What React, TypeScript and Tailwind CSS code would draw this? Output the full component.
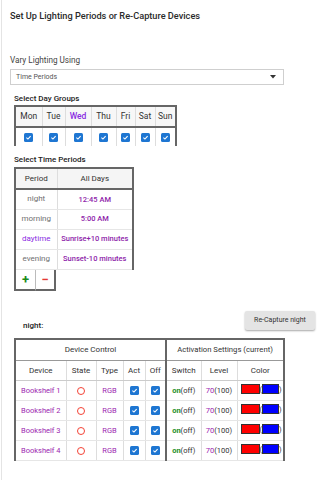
import React from "react";

const font = { fontFamily: "Roboto, 'Liberation Sans', sans-serif" };

function Check() {
  return (
    <span className="inline-flex h-[9px] w-[9px] items-center justify-center rounded-[1.5px] bg-[#1e76d2] align-middle">
      <svg width="7" height="7" viewBox="0 0 10 10">
        <path d="M2 5.2 L4.2 7.2 L8 3" stroke="white" strokeWidth="1.6" fill="none" />
      </svg>
    </span>
  );
}

function Swatches() {
  return (
    <span className="inline-flex items-center text-[7.5px] text-[#333]">
      <span className="inline-block h-[10px] w-[19px] border border-[#333] bg-[#ff0000]" />
      <span>(</span>
      <span className="inline-block h-[10px] w-[17px] border border-[#333] bg-[#0000ff]" />
      <span>)</span>
    </span>
  );
}

const days = ["Mon", "Tue", "Wed", "Thu", "Fri", "Sat", "Sun"];
const dayW = [27, 23, 26, 25, 19, 20, 21];

const periods = [
  { p: "night", t: "12:45 AM", pc: "text-[#6f6f6f]" },
  { p: "morning", t: "5:00 AM", pc: "text-[#6f6f6f]" },
  { p: "daytime", t: "Sunrise+10 minutes", pc: "text-[#8a2be2]" },
  { p: "evening", t: "Sunset-10 minutes", pc: "text-[#6f6f6f]" },
];

export default function App() {
  return (
    <div style={font} className="h-[480px] w-[331px] bg-white">
      <div className="ml-[1px] h-[480px] border-l border-[#e4e4e4] pl-[8px]">
        <div className="pt-[10px] text-[9.2px] font-medium leading-[12px] text-[#2a2a2a]">
          Set Up Lighting Periods or Re-Capture Devices
        </div>
        <div className="mt-[33px] text-[8.2px] leading-[10px] text-[#444]">Vary Lighting Using</div>
        <div className="mt-[4px] flex h-[16px] w-[274px] items-center justify-between border border-[#cfcfcf] pl-[5px] pr-[7px] text-[7px] text-[#555]">
          <span>Time Periods</span>
          <svg width="6" height="4" viewBox="0 0 6 4">
            <path d="M0 0 H6 L3 3.5 Z" fill="#333" />
          </svg>
        </div>

        <div className="ml-[4px] mt-[9px] text-[8px] font-medium leading-[10px] text-[#222]">Select Day Groups</div>
        <table className="ml-[4px] mt-[1px] border-collapse text-[8.5px] text-[#333]">
          <tbody>
            <tr className="h-[21px] bg-[#f7f7f7]">
              {days.map((d, i) => (
                <td
                  key={d}
                  style={{ width: dayW[i] }}
                  className={`border-t-2 border-b-2 border-t-[#666] border-b-[#666] p-0 text-center ${
                    i === 0 ? "border-l-2 border-l-[#666]" : "border-l border-l-[#ddd]"
                  } ${i === 6 ? "border-r-2 border-r-[#666]" : ""} ${d === "Wed" ? "font-medium text-[#8a2be2]" : ""}`}
                >
                  {d}
                </td>
              ))}
            </tr>
            <tr className="h-[19px]">
              {days.map((d, i) => (
                <td
                  key={d}
                  className={`p-0 text-center ${
                    i === 0 ? "border-l-2 border-l-[#666]" : "border-l border-l-[#ddd]"
                  } ${i === 6 ? "border-r-2 border-r-[#666]" : ""}`}
                >
                  <Check />
                </td>
              ))}
            </tr>
          </tbody>
        </table>

        <div className="ml-[4px] mt-[9px] text-[8px] font-medium leading-[10px] text-[#222]">Select Time Periods</div>
        <table className="ml-[4px] mt-[2px] border-collapse text-[8px]">
          <tbody>
            <tr className="h-[21px] bg-[#f5f5f5] text-[#333]">
              <td className="w-[42px] border-2 border-[#666] border-r-[#ddd] border-r p-0 text-center">Period</td>
              <td className="w-[76px] border-2 border-[#666] border-l-0 p-0 text-center">All Days</td>
            </tr>
            {periods.map((r) => (
              <tr key={r.p} className="h-[20px]">
                <td className={`border-b border-l-2 border-r border-b-[#e6e6e6] border-l-[#666] border-r-[#ddd] p-0 text-center ${r.pc}`}>
                  {r.p}
                </td>
                <td className="border-b border-r-2 border-b-[#e6e6e6] border-r-[#666] p-0 text-center text-[7.5px] font-medium text-[#8e24aa]">
                  {r.t}
                </td>
              </tr>
            ))}
          </tbody>
        </table>
        <div className="ml-[4px] flex h-[21px]">
          <div className="flex w-[22px] items-center justify-center border-b-2 border-l-2 border-r border-[#666] border-r-[#bbb] text-[13px] font-bold leading-none text-[#1a8a1a]">
            +
          </div>
          <div className="flex w-[20px] items-center justify-center border-b-2 border-r-2 border-[#666] text-[13px] font-bold leading-none text-[#e53935]">
            −
          </div>
        </div>

        <div className="mt-[20px] flex h-[19px] items-center justify-between pr-[16px]">
          <span className="ml-[13px] mt-[12px] text-[8px] font-medium text-[#222]">night:</span>
          <button className="h-[19px] w-[70px] rounded-[2px] bg-[#e4e4e4] text-[7px] text-[#333] shadow-[0_1px_2px_rgba(0,0,0,0.35)]">
            Re-Capture night
          </button>
        </div>

        <table className="ml-[4px] mt-[8px] border-collapse text-[8px] text-[#333]">
          <tbody>
            <tr className="h-[22px]">
              <td colSpan={5} className="border-2 border-[#666] border-b border-b-[#999] p-0 text-center">
                Device Control
              </td>
              <td colSpan={3} className="border-2 border-[#666] border-b border-b-[#999] p-0 text-center text-[7.7px]">
                Activation Settings (current)
              </td>
            </tr>
            <tr className="h-[20px]">
              <td className="w-[51px] border-b border-l-2 border-r border-b-[#ccc] border-l-[#666] border-r-[#ddd] p-0 text-center">Device</td>
              <td className="w-[30px] border-b border-r border-b-[#ccc] border-r-[#ddd] p-0 text-center">State</td>
              <td className="w-[27px] border-b border-r border-b-[#ccc] border-r-[#ddd] p-0 text-center">Type</td>
              <td className="w-[22px] border-b border-r border-b-[#ccc] border-r-[#ddd] p-0 text-center">Act</td>
              <td className="w-[21px] border-b border-r-2 border-b-[#ccc] border-r-[#666] p-0 text-center">Off</td>
              <td className="w-[35px] border-b border-r border-b-[#ccc] border-r-[#ddd] p-0 text-center">Switch</td>
              <td className="w-[36px] border-b border-r border-b-[#ccc] border-r-[#ddd] p-0 text-center">Level</td>
              <td className="w-[47px] border-b border-r-2 border-b-[#ccc] border-r-[#666] p-0 text-center">Color</td>
            </tr>
            {[1, 2, 3, 4].map((n) => (
              <tr key={n} className="h-[20px] text-[7.5px]">
                <td className="border-b border-l-2 border-r border-b-[#e6e6e6] border-l-[#666] border-r-[#ddd] p-0 text-center text-[#9c27b0]">
                  Bookshelf {n}
                </td>
                <td className="border-b border-r border-b-[#e6e6e6] border-r-[#ddd] p-0 text-center">
                  <span className="inline-block h-[8px] w-[8px] rounded-full border-[1.3px] border-[#f44336] align-middle" />
                </td>
                <td className="border-b border-r border-b-[#e6e6e6] border-r-[#ddd] p-0 text-center text-[#9c27b0]">RGB</td>
                <td className="border-b border-r border-b-[#e6e6e6] border-r-[#ddd] p-0 text-center">
                  <Check />
                </td>
                <td className="border-b border-r-2 border-b-[#e6e6e6] border-r-[#666] p-0 text-center">
                  <Check />
                </td>
                <td className="border-b border-r border-b-[#e6e6e6] border-r-[#ddd] p-0 text-center">
                  <span className="font-bold text-[#1e8e1e]">on</span>(off)
                </td>
                <td className="border-b border-r border-b-[#e6e6e6] border-r-[#ddd] p-0 text-center">
                  <span className="text-[#9c27b0]">70</span>(100)
                </td>
                <td className="border-b border-r-2 border-b-[#e6e6e6] border-r-[#666] p-0 pl-[3px] text-left">
                  <Swatches />
                </td>
              </tr>
            ))}
          </tbody>
        </table>
      </div>
    </div>
  );
}
